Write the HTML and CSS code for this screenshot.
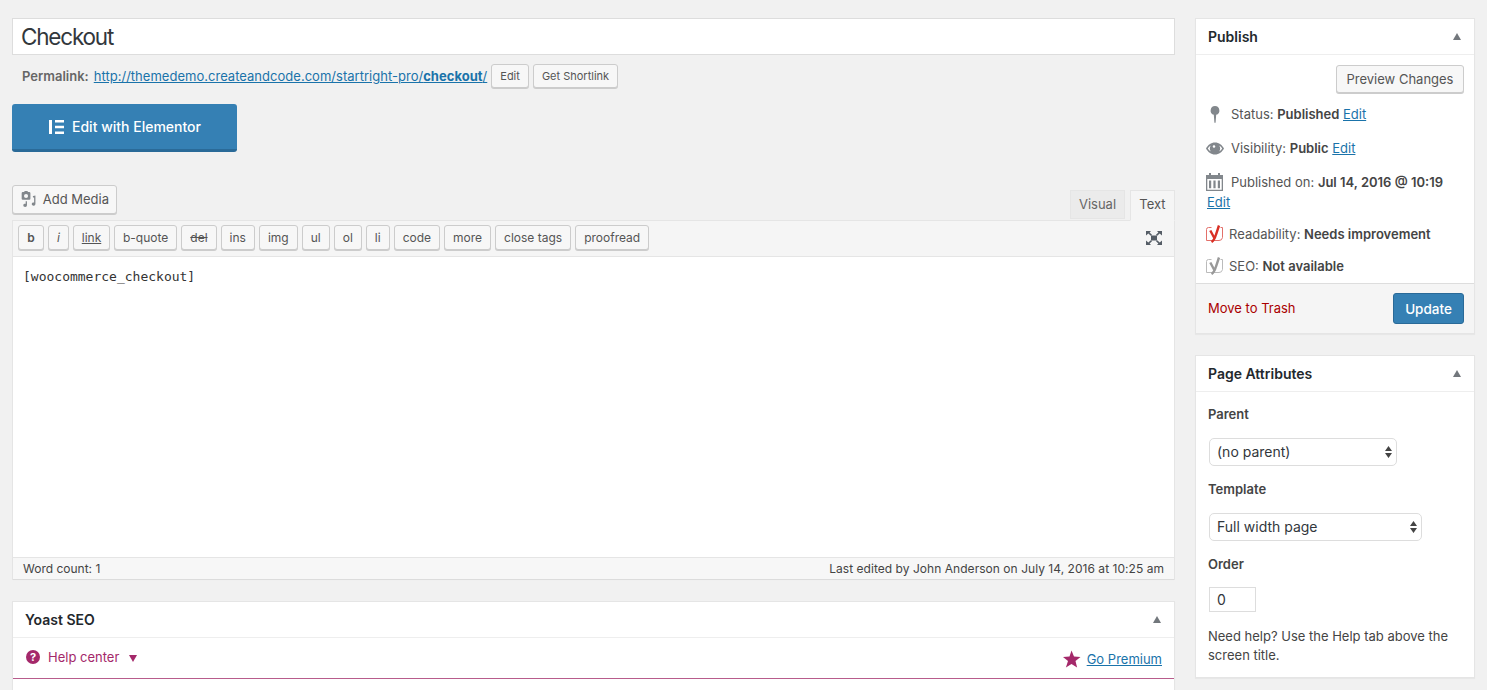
FILE: index.html
```html
<!DOCTYPE html>
<html lang="en">
<head>
<meta charset="utf-8">
<title>Edit Page</title>
<link rel="stylesheet" href="styles.css">
</head>
<body>
<div class="wrap">
  <main class="main">
    <input class="title" value="Checkout">
    <div class="permalink">
      <strong class="perma-label">Permalink:</strong>
      <a href="#" class="perma-link">http://themedemo.createandcode.com/startright-pro/<b>checkout</b>/</a>
      <button class="btn btn-small">Edit</button>
      <button class="btn btn-small">Get Shortlink</button>
    </div>
    <a href="#" class="elementor">
      <svg class="el-icon" width="17" height="16" viewBox="0 0 17 16"><path fill="#fff" d="M1 1h3v14H1zM7 1h9v2.6H7zM7 6.700h9v2.600H7zM7 12.400h9V15H7z"/></svg>
      Edit with Elementor
    </a>
    <div class="editor-tools">
      <button class="btn add-media">
        <svg width="18" height="18" viewBox="0 0 18 18"><path fill="#82878c" fill-rule="evenodd" d="M3 1.500h1.500L5 .5h3l.6 1H10a1.200 1.200 0 0 1 1.200 1.200v6A1.200 1.200 0 0 1 10 9.900H3a1.200 1.200 0 0 1-1.200-1.200v-6A1.200 1.200 0 0 1 3 1.500zm3.500 2a2.200 2.200 0 1 0 0 4.400 2.200 2.200 0 0 0 0-4.400z"/><path fill="#82878c" d="M13 6l3.600-.8v9.300a2 1.700 0 1 1-1.400-1.600V7.300L14 7.500V6zM7.500 11.500v4.300a2 1.700 0 1 1-1.400-1.600v-2.700z"/></svg>
        <span>Add Media</span>
      </button>
      <div class="tabs">
        <span class="tab">Visual</span>
        <span class="tab tab-active">Text</span>
      </div>
    </div>
    <section class="editor">
      <div class="toolbar">
        <button class="qt qt-b">b</button>
        <button class="qt qt-i">i</button>
        <button class="qt qt-u">link</button>
        <button class="qt">b-quote</button>
        <button class="qt qt-s">del</button>
        <button class="qt">ins</button>
        <button class="qt">img</button>
        <button class="qt">ul</button>
        <button class="qt">ol</button>
        <button class="qt">li</button>
        <button class="qt">code</button>
        <button class="qt">more</button>
        <button class="qt">close tags</button>
        <button class="qt">proofread</button>
        <svg class="expand" width="18" height="16" viewBox="0 0 18 16"><path fill="#555d66" d="M6 5.500h6v5H6zM1 1h5L4.600 2.400 7 4.700 5.800 5.800 3.300 3.500 1 5.500zM17 1h-5l1.400 1.400L11 4.700l1.200 1.100 2.500-2.300L17 5.500zM1 15h5l-1.400-1.400L7 11.300l-1.200-1.100-2.500 2.300L1 10.500zM17 15h-5l1.400-1.400L11 11.300l1.200-1.100 2.500 2.300 2.300-2z"/></svg>
      </div>
      <div class="content">[woocommerce_checkout]</div>
      <div class="status">
        <span>Word count: 1</span>
        <span class="last-edit">Last edited by John Anderson on July 14, 2016 at 10:25 am</span>
      </div>
    </section>
    <section class="box yoast">
      <header class="box-head">
        <h2>Yoast SEO</h2>
        <i class="caret"></i>
      </header>
      <div class="yoast-tabs">
        <span class="help">
          <svg width="16" height="16" viewBox="0 0 16 16"><circle cx="8" cy="8" r="7" fill="#a4286a"/><text x="8" y="12" text-anchor="middle" class="help-mark">?</text></svg>
          <span class="help-text">Help center</span>
          <i class="help-caret"></i>
        </span>
        <span class="premium">
          <svg width="19" height="18" viewBox="0 0 19 18"><path fill="#a4286a" d="M9.500.5l2.500 6 6.500.4-5 4.200 1.600 6.400-5.600-3.500-5.600 3.500L6 11.100 1 6.900l6.500-.4z"/></svg>
          <a href="#">Go Premium</a>
        </span>
      </div>
    </section>
  </main>
  <aside class="side">
    <section class="box publish">
      <header class="box-head">
        <h2>Publish</h2>
        <i class="caret"></i>
      </header>
      <div class="preview-row"><button class="btn btn-preview">Preview Changes</button></div>
      <div class="pub-row pub-status">
        <svg class="ic-pin" width="10" height="17" viewBox="0 0 10 17"><path fill="#82878c" d="M5 0a4.500 4.500 0 0 1 1.200 8.800L5.600 16.500 5 17l-.6-.5-.6-7.700A4.500 4.500 0 0 1 5 0z"/></svg>
        <span>Status: <b>Published</b> <a href="#">Edit</a></span>
      </div>
      <div class="pub-row pub-vis">
        <svg width="18" height="13" viewBox="0 0 18 13"><path fill="#82878c" fill-rule="evenodd" d="M9 .5c4 0 7.200 2.600 9 6-1.800 3.400-5 6-9 6s-7.200-2.600-9-6c1.800-3.400 5-6 9-6zM1.800 6.500c.8 1.200 1.800 2.200 3 3a5.400 5.400 0 0 1 0-6c-1.200.8-2.200 1.800-3 3zm11.400-3a5.400 5.400 0 0 1 0 6c1.200-.8 2.200-1.800 3-3-.8-1.200-1.800-2.200-3-3zM8 3.200a1.300 1.300 0 1 0 0 2.600 1.300 1.300 0 0 0 0-2.600z"/></svg>
        <span>Visibility: <b>Public</b> <a href="#">Edit</a></span>
      </div>
      <div class="pub-row pub-date">
        <svg width="17" height="18" viewBox="0 0 17 18"><path fill="#82878c" fill-rule="evenodd" d="M3 0h2v2h7V0h2v2h3v16H0V2h3zM1.300 6v10.700h14.400V6zM3 7.500h2.200v7.800H3zm4.400 0h2.200v7.800H7.400zm4.400 0H14v7.800h-2.200z"/></svg>
        <span>Published on: <b>Jul 14, 2016 @ 10:19</b></span>
        <a class="date-edit" href="#">Edit</a>
      </div>
      <div class="pub-row pub-yoast pub-read">
        <svg width="17" height="18" viewBox="0 0 17 18"><path fill="none" stroke="#e3706a" stroke-width="1" d="M5.500 2.500h-3A2 2 0 0 0 .5 4.500v11h12.500a3.500 3.500 0 0 0 3.500-3V2.500h-2"/><path fill="none" stroke="#d93025" stroke-width="2.400" d="M4.300 5.500 8.300 13M13 .5 10 9.500C9 13 8 15.500 5.500 17"/></svg>
        <span>Readability: <b>Needs improvement</b></span>
      </div>
      <div class="pub-row pub-yoast pub-seo">
        <svg width="17" height="18" viewBox="0 0 17 18"><path fill="none" stroke="#bbb" stroke-width="1" d="M5.500 2.500h-3A2 2 0 0 0 .5 4.500v11h12.500a3.500 3.500 0 0 0 3.500-3V2.500h-2"/><path fill="none" stroke="#999" stroke-width="2.400" d="M4.300 5.500 8.300 13M13 .5 10 9.500C9 13 8 15.500 5.500 17"/></svg>
        <span>SEO: <b>Not available</b></span>
      </div>
      <footer class="pub-foot">
        <a href="#" class="trash">Move to Trash</a>
        <button class="btn-update">Update</button>
      </footer>
    </section>
    <section class="box attrs">
      <header class="box-head">
        <h2>Page Attributes</h2>
        <i class="caret"></i>
      </header>
      <div class="attrs-body">
        <p class="attr-label attr-first">Parent</p>
        <div class="select select-parent">
          <select><option>(no parent)</option></select>
          <svg class="updown" width="7" height="12" viewBox="0 0 7 12"><path fill="#444" d="M3.500 0 7 5H0zM3.500 12 0 7h7z"/></svg>
        </div>
        <p class="attr-label">Template</p>
        <div class="select select-template">
          <select><option>Full width page</option></select>
          <svg class="updown" width="7" height="12" viewBox="0 0 7 12"><path fill="#444" d="M3.500 0 7 5H0zM3.500 12 0 7h7z"/></svg>
        </div>
        <p class="attr-label">Order</p>
        <input class="order" value="0">
        <p class="attr-help">Need help? Use the Help tab above the screen title.</p>
      </div>
    </section>
  </aside>
</div>
</body>
</html>
```

FILE: styles.css
```css
* { box-sizing: border-box; }
html, body { margin: 0; height: 690px; overflow: hidden; }
body {
  background: #f1f1f1;
  color: #444;
  font-family: Inter, "Liberation Sans", sans-serif;
  font-size: 13px;
  -webkit-font-smoothing: antialiased;
}
a { color: #1a73aa; }
button { font-family: inherit; margin: 0; cursor: pointer; }
.wrap { display: flex; gap: 20px; padding: 18px 12px 0; align-items: flex-start; }
.main { width: 1163px; flex: none; }
.side { width: 280px; flex: none; }

.title {
  display: block;
  width: 100%;
  height: 37px;
  border: 1px solid #ddd;
  background: #fff;
  padding: 0 8px;
  font: 400 22.500px Inter, "Liberation Sans", sans-serif;
  letter-spacing: -1.200px;
  color: #32373c;
  outline: 0;
}
.permalink {
  display: flex;
  align-items: center;
  height: 26px;
  margin-top: 8px;
  padding-left: 10px;
  font-size: 13px;
}
.perma-label { color: #666; font-weight: 600; margin-right: 5px; }
.perma-link { margin-right: 4px; letter-spacing: .02px; }
.btn {
  background: #f7f7f7;
  border: 1px solid #ccc;
  border-radius: 3px;
  box-shadow: 0 1px 0 #ccc;
  color: #555;
  padding: 0 8px;
}
.btn-small { height: 24px; font-size: 11px; margin-right: 4px; }
.elementor {
  display: flex;
  align-items: center;
  justify-content: center;
  gap: 7px;
  width: 225px;
  height: 48px;
  margin-top: 15px;
  border-radius: 3px;
  background: #3580b4;
  border-bottom: 3px solid #2a6a98;
  color: #fff;
  font-size: 14px;
  font-weight: 500;
  text-decoration: none;
}
.editor-tools {
  display: flex;
  justify-content: space-between;
  align-items: flex-end;
  margin-top: 33px;
  height: 35px;
}
.add-media {
  display: flex;
  align-items: center;
  gap: 6px;
  height: 29px;
  width: 105px;
  padding: 0 7px 2px;
  margin-bottom: 6px;
  font-size: 13px;
  white-space: nowrap;
}
.tabs { display: flex; gap: 5px; margin-bottom: -1px; position: relative; }
.tab {
  display: flex;
  align-items: center;
  justify-content: center;
  width: 55px;
  height: 29px;
  padding-bottom: 2px;
  background: #ebebeb;
  border: 1px solid #e5e5e5;
  color: #666;
  font-size: 13px;
}
.tab-active {
  width: 45px;
  height: 31px;
  padding-bottom: 3px;
  background: #f5f5f5;
  border-bottom-color: #f5f5f5;
  color: #555;
}
.editor { border: 1px solid #e5e5e5; }
.toolbar {
  display: flex;
  align-items: center;
  gap: 4px;
  height: 36px;
  padding: 0 11px 2px 5px;
  background: #f5f5f5;
  border-bottom: 1px solid #e5e5e5;
}
.qt {
  height: 25px;
  padding: 0 8px;
  background: #f7f7f7;
  border: 1px solid #ccc;
  border-radius: 3px;
  box-shadow: 0 1px 0 #ccc;
  color: #555;
  font-size: 12px;
}
.qt-b { font-weight: 600; width: 26px; padding: 0; }
.qt-i { font-style: italic; width: 21px; padding: 0; }
.qt-u { text-decoration: underline; width: 37px; padding: 0; }
.qt-s { text-decoration: line-through; }
.expand { margin-left: auto; }
.content {
  height: 300px;
  background: #fff;
  padding: 10px;
  font-family: "DejaVu Sans Mono", "Liberation Mono", monospace;
  font-size: 13px;
  line-height: 19px;
  color: #333;
}
.status {
  display: flex;
  justify-content: space-between;
  align-items: center;
  height: 22px;
  padding: 0 10px;
  background: #f7f7f7;
  border-top: 1px solid #e5e5e5;
  font-size: 12px;
  color: #444;
  box-shadow: 0 1px 1px rgba(0,0,0,.04);
}
.last-edit { letter-spacing: .04px; }

.box {
  background: #fff;
  border: 1px solid #e5e5e5;
  box-shadow: 0 1px 1px rgba(0,0,0,.04);
}
.box-head {
  display: flex;
  align-items: center;
  justify-content: space-between;
  height: 36px;
  padding: 0 13px 0 12px;
  border-bottom: 1px solid #eee;
}
.box-head h2 {
  margin: 0;
  font-size: 14px;
  font-weight: 600;
  color: #23282d;
}
.caret {
  display: block;
  width: 0;
  height: 0;
  border-left: 4px solid transparent;
  border-right: 4px solid transparent;
  border-bottom: 7px solid #72777c;
}
.yoast { margin-top: 21px; height: 110px; overflow: hidden; }
.yoast-tabs {
  display: flex;
  justify-content: space-between;
  align-items: center;
  height: 41px;
  padding: 0 12px;
  border-bottom: 1px solid #b85c8c;
}
.help { display: flex; align-items: center; color: #a4286a; font-size: 13px; margin-bottom: 2px; }
.help svg { margin-right: 7px; }
.help-mark { fill: #fff; font: 700 11px Inter, "Liberation Sans", sans-serif; }
.help-caret {
  width: 0; height: 0; margin-left: 10px; margin-top: 2px;
  border-left: 4px solid transparent;
  border-right: 4px solid transparent;
  border-top: 7px solid #a4286a;
}
.premium { display: flex; align-items: center; gap: 6px; font-size: 13px; margin-top: 2px; }

.preview-row { display: flex; justify-content: flex-end; padding: 10px 10px 0; }
.btn-preview { height: 28px; font-size: 13px; width: 128px; padding: 0; }
.pub-row { display: flex; align-items: center; flex-wrap: wrap; }
.pub-row svg { flex: none; }
.pub-row span { color: #555; }
.pub-row b { font-weight: 600; color: #444; }
.pub-status { margin-top: 10px; height: 22px; padding-left: 14px; }
.pub-status svg { margin-right: 11px; }
.pub-vis { margin-top: 12px; height: 22px; padding-left: 10px; }
.pub-vis svg { margin-right: 7px; }
.pub-date { margin-top: 14px; padding-left: 10px; }
.pub-date svg { margin-right: 8px; }
.date-edit { width: 100%; margin-top: 1px; padding-top: 2px; padding-left: 1px; }
.pub-yoast { padding-left: 10px; height: 22px; }
.pub-yoast svg { margin-right: 6px; }
.pub-read { margin-top: 13px; }
.pub-seo { margin-top: 10px; }
.pub-foot {
  display: flex;
  align-items: center;
  justify-content: space-between;
  height: 50px;
  margin-top: 6px;
  padding: 0 10px 0 12px;
  background: #f5f5f5;
  border-top: 1px solid #ddd;
}
.trash { color: #a00; font-size: 13px; text-decoration: none; margin-bottom: 2px; }
.btn-update {
  width: 71px;
  height: 31px;
  border: 1px solid #2a6a98;
  border-radius: 3px;
  background: #3580b4;
  color: #fff;
  font-size: 13.500px;
  font-weight: 500;
}
.attrs { margin-top: 21px; height: 323px; }
.attrs-body { padding: 0 12px; }
.attr-label { margin: 13px 0 0; font-weight: 600; color: #444; line-height: 20px; }
.attr-first { margin-top: 12px; }
.select { position: relative; margin: 14px 0 0 1px; height: 28px; }
.select select {
  appearance: none;
  -webkit-appearance: none;
  display: block;
  width: 100%;
  height: 100%;
  padding: 0 8px 2px 7px;
  border: 1px solid #ddd;
  border-radius: 5px;
  background: #fff;
  font: 400 14px Inter, "Liberation Sans", sans-serif;
  color: #32373c;
}
.select-parent { width: 188px; }
.select-template { width: 213px; }
.updown { position: absolute; right: 5px; top: 8px; }
.order {
  display: block;
  width: 47px;
  height: 25px;
  margin: 13px 0 0 1px;
  padding: 0 7px;
  border: 1px solid #ddd;
  background: #fff;
  font: 400 14px Inter, "Liberation Sans", sans-serif;
  color: #32373c;
  outline: 0;
}
.attr-help { margin: 15px 0 0; line-height: 19px; color: #444; }
```
